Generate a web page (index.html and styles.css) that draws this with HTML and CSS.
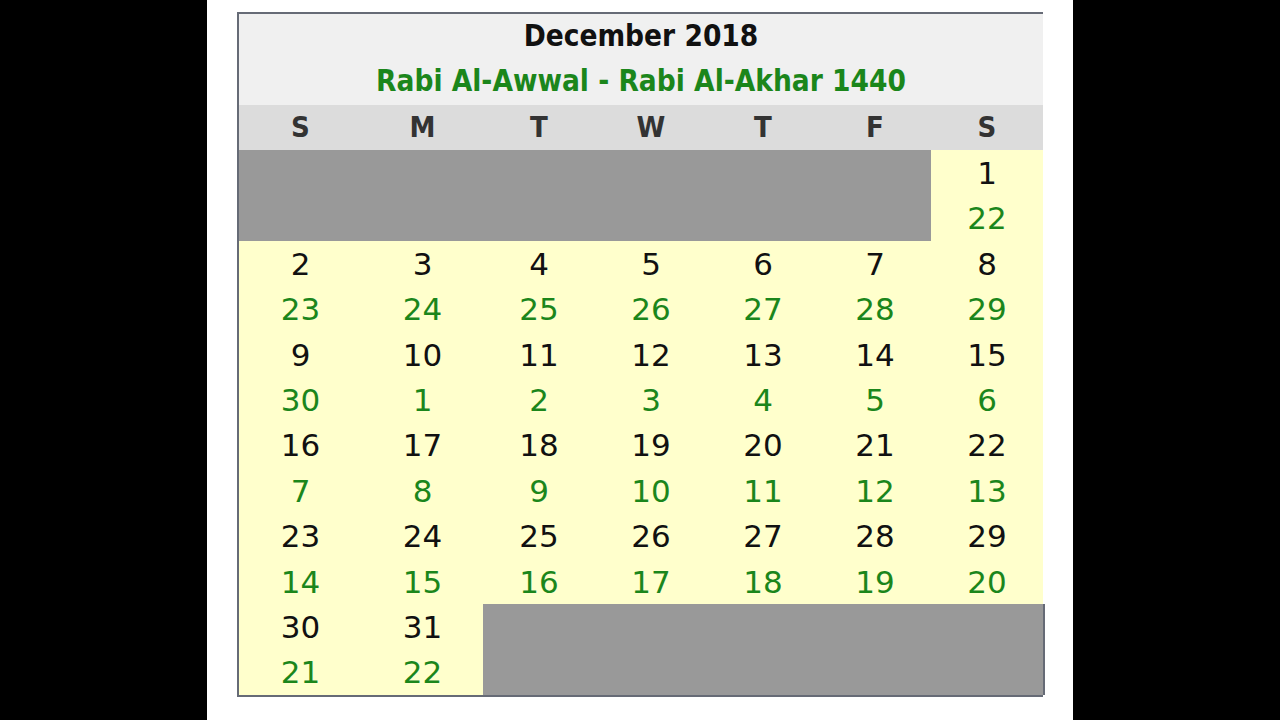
FILE: index.html
```html
<!DOCTYPE html>
<html lang="en">
<head>
<meta charset="utf-8">
<title>December 2018</title>
<link rel="stylesheet" href="styles.css">
</head>
<body>
<div class="panel">
  <div class="cal">
    <div class="head">
      <div class="title">December 2018</div>
      <div class="hijri">Rabi Al-Awwal - Rabi Al-Akhar 1440</div>
    </div>
    <div class="grid">
      <div class="dn">S</div><div class="dn">M</div><div class="dn">T</div><div class="dn">W</div><div class="dn">T</div><div class="dn">F</div><div class="dn">S</div>
      <div class="blank first"></div>
      <div class="cell"><span class="g">1</span><span class="h">22</span></div>

      <div class="cell"><span class="g">2</span><span class="h">23</span></div>
      <div class="cell"><span class="g">3</span><span class="h">24</span></div>
      <div class="cell"><span class="g">4</span><span class="h">25</span></div>
      <div class="cell"><span class="g">5</span><span class="h">26</span></div>
      <div class="cell"><span class="g">6</span><span class="h">27</span></div>
      <div class="cell"><span class="g">7</span><span class="h">28</span></div>
      <div class="cell"><span class="g">8</span><span class="h">29</span></div>

      <div class="cell"><span class="g">9</span><span class="h">30</span></div>
      <div class="cell"><span class="g">10</span><span class="h">1</span></div>
      <div class="cell"><span class="g">11</span><span class="h">2</span></div>
      <div class="cell"><span class="g">12</span><span class="h">3</span></div>
      <div class="cell"><span class="g">13</span><span class="h">4</span></div>
      <div class="cell"><span class="g">14</span><span class="h">5</span></div>
      <div class="cell"><span class="g">15</span><span class="h">6</span></div>

      <div class="cell"><span class="g">16</span><span class="h">7</span></div>
      <div class="cell"><span class="g">17</span><span class="h">8</span></div>
      <div class="cell"><span class="g">18</span><span class="h">9</span></div>
      <div class="cell"><span class="g">19</span><span class="h">10</span></div>
      <div class="cell"><span class="g">20</span><span class="h">11</span></div>
      <div class="cell"><span class="g">21</span><span class="h">12</span></div>
      <div class="cell"><span class="g">22</span><span class="h">13</span></div>

      <div class="cell"><span class="g">23</span><span class="h">14</span></div>
      <div class="cell"><span class="g">24</span><span class="h">15</span></div>
      <div class="cell"><span class="g">25</span><span class="h">16</span></div>
      <div class="cell"><span class="g">26</span><span class="h">17</span></div>
      <div class="cell"><span class="g">27</span><span class="h">18</span></div>
      <div class="cell"><span class="g">28</span><span class="h">19</span></div>
      <div class="cell"><span class="g">29</span><span class="h">20</span></div>

      <div class="cell"><span class="g">30</span><span class="h">21</span></div>
      <div class="cell"><span class="g">31</span><span class="h">22</span></div>
      <div class="blank last"></div>
    </div>
  </div>
</div>
</body>
</html>
```

FILE: styles.css
```css
html, body {
  margin: 0;
  padding: 0;
  background: #000;
  height: 720px;
  overflow: hidden;
}

.panel {
  width: 836px;
  height: 708px;
  margin-left: 207px;
  padding: 12px 0 0 30px;
  background: #fff;
}

.cal {
  box-sizing: border-box;
  width: 806px;
  border-top: 2px solid #666b76;
  border-left: 2px solid #666b76;
  border-bottom: 2px solid #666b76;
}

.head {
  background: #f0f0f0;
  height: 91px;
  display: flex;
  flex-direction: column;
  align-items: center;
  font-family: "DejaVu Sans", sans-serif;
  font-stretch: condensed;
  font-weight: bold;
  font-size: 29.5px;
}

.title {
  height: 44px;
  line-height: 44px;
  color: #111;
}

.hijri {
  height: 47px;
  line-height: 47px;
  color: #1b861b;
}

.grid {
  display: grid;
  grid-template-columns: 123px 121px repeat(5, 112px);
  width: 804px;
  font-family: "DejaVu Sans", sans-serif;
}

.dn {
  background: #dcdcdc;
  height: 45px;
  line-height: 45px;
  text-align: center;
  font-stretch: condensed;
  font-weight: bold;
  font-size: 29px;
  color: #333;
}

.cell {
  background: #ffffcc;
  display: flex;
  flex-direction: column;
  align-items: center;
  font-size: 31px;
}

.cell span {
  height: 45.4px;
  line-height: 45.4px;
  position: relative;
  top: 1px;
}

.g {
  color: #111;
}

.h {
  color: #1b861b;
}

.blank {
  background: #999;
}

.first {
  grid-column: span 6;
}

.last {
  grid-column: span 5;
  margin-right: -2px;
  border-right: 2px solid #666b76;
}
```
